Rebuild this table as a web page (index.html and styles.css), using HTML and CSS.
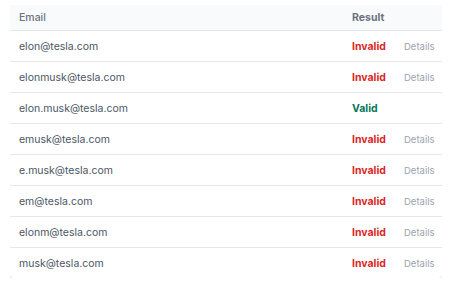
FILE: index.html
```html
<!DOCTYPE html>
<html lang="en">
<head>
  <meta charset="UTF-8">
  <title>Email check</title>
  <link rel="stylesheet" href="styles.css">
</head>
<body>
  <div class="card">
    <div class="row row--head">
      <span class="row__email">Email</span>
      <span class="row__status">Result</span>
      <span class="row__more"></span>
    </div>
    <div class="row">
      <span class="row__email">elon@tesla.com</span>
      <span class="row__status is-invalid">Invalid</span>
      <a class="row__more" href="#">Details</a>
    </div>
    <div class="row">
      <span class="row__email">elonmusk@tesla.com</span>
      <span class="row__status is-invalid">Invalid</span>
      <a class="row__more" href="#">Details</a>
    </div>
    <div class="row">
      <span class="row__email">elon.musk@tesla.com</span>
      <span class="row__status is-valid">Valid</span>
      <span class="row__more"></span>
    </div>
    <div class="row">
      <span class="row__email">emusk@tesla.com</span>
      <span class="row__status is-invalid">Invalid</span>
      <a class="row__more" href="#">Details</a>
    </div>
    <div class="row">
      <span class="row__email">e.musk@tesla.com</span>
      <span class="row__status is-invalid">Invalid</span>
      <a class="row__more" href="#">Details</a>
    </div>
    <div class="row">
      <span class="row__email">em@tesla.com</span>
      <span class="row__status is-invalid">Invalid</span>
      <a class="row__more" href="#">Details</a>
    </div>
    <div class="row">
      <span class="row__email">elonm@tesla.com</span>
      <span class="row__status is-invalid">Invalid</span>
      <a class="row__more" href="#">Details</a>
    </div>
    <div class="row">
      <span class="row__email">musk@tesla.com</span>
      <span class="row__status is-invalid">Invalid</span>
      <a class="row__more" href="#">Details</a>
    </div>
  </div>
</body>
</html>
```

FILE: styles.css
```css
html {
  box-sizing: border-box;
  background: #fff;
}

*, *:before, *:after {
  box-sizing: inherit;
}

body {
  margin: 5px 8px 0 10px;
  font-family: Inter, "Noto Sans", sans-serif;
  font-size: 10.5px;
  color: #4b5563;
}

.card {
  width: 432px;
  border-radius: 4px;
  overflow: hidden;
  background: #fff;
  box-shadow: 0 1px 3px rgba(0,0,0,0.12), 0 1px 2px rgba(0,0,0,0.08);
}

.row {
  display: grid;
  grid-template-columns: 1fr 52px 47px;
  align-items: center;
  height: 31px;
  border-top: 1px solid #e5e7eb;
}

.row > * {
  padding: 0 9px;
}

.row--head {
  height: 26px;
  border-top: 0;
  border-bottom: 1px solid #e5e7eb;
  background: #f9fafb;
  color: #6b7280;
  font-weight: 500;
}

.row--head + .row {
  height: 30px;
  border-top: 0;
}

.row__status {
  font-weight: 700;
}

.row__more {
  text-align: right;
  color: #9ca3af;
  text-decoration: none;
  font-size: 9.5px;
}

.is-invalid {
  color: #dc2626;
}

.is-valid {
  color: #047857;
}
```
